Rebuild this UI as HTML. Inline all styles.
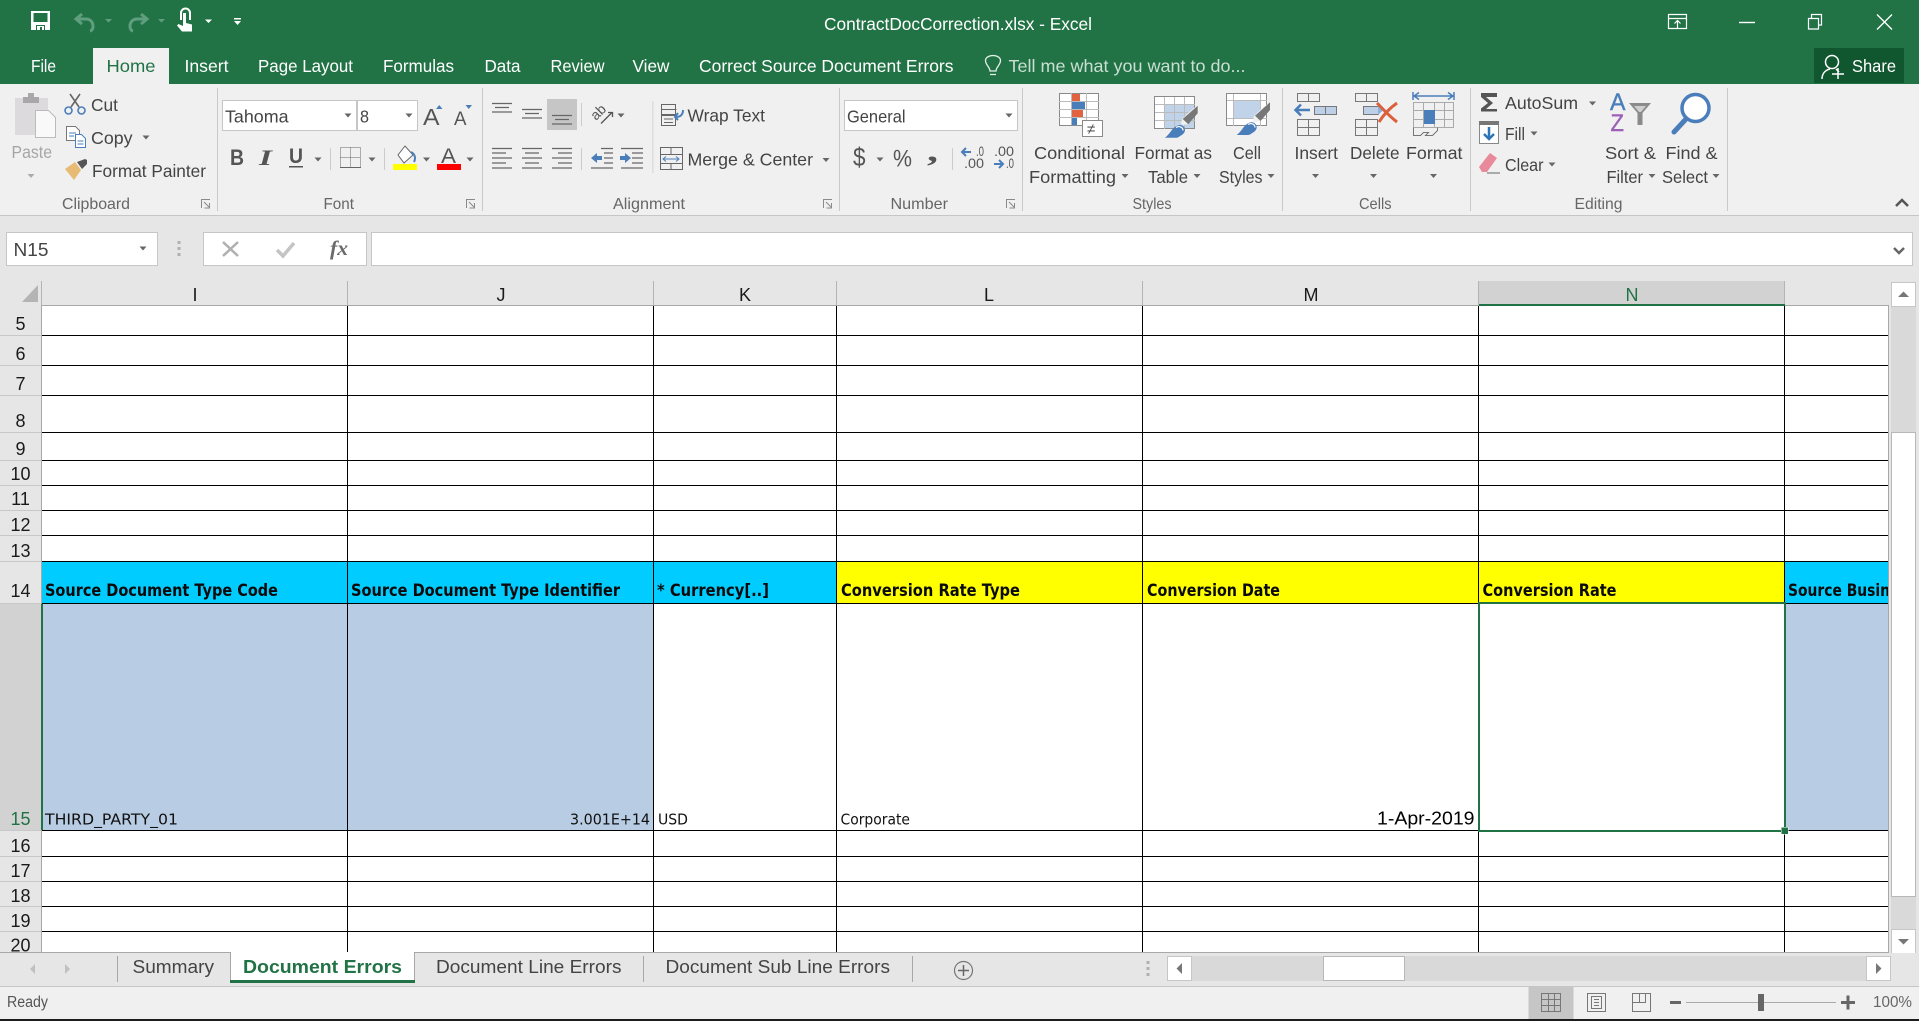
<!DOCTYPE html>
<html lang="en"><head><meta charset="utf-8"><title>ContractDocCorrection.xlsx - Excel</title>
<style>
html,body{margin:0;padding:0;background:#e6e6e6;overflow:hidden}
svg{display:block;position:absolute;left:0;top:0}
text{font-family:"Liberation Sans",sans-serif;font-size:17.5px;fill:#444;white-space:pre}
.w{fill:#fff}
.g{font-size:16px;fill:#666}
.h{font-size:18px;fill:#1a1a1a;text-anchor:middle}
.c{font-family:"DejaVu Sans",sans-serif;font-size:15px;fill:#111}
.b{font-family:"DejaVu Sans",sans-serif;font-weight:bold;font-size:16.5px;fill:#0a0a0a}
</style></head><body>
<svg width="1919" height="1021" viewBox="0 0 1919 1021" xmlns="http://www.w3.org/2000/svg">
<rect width="1919" height="1021" fill="#e6e6e6"/>
<!-- title bar -->
<rect width="1919" height="84" fill="#217346"/>
<path d="M31 11h19v19H31z" fill="#fff"/><path d="M33.500 13h14v9h-14z" fill="#217346"/><path d="M36 25h9v5h-9z" fill="#217346"/><path d="M37 26h7v4h-2v-3h-2v3h-3z" fill="#fff"/>
<g fill="none" stroke="#5f9f7f" stroke-width="3"><path d="M90 31c5-1 4-12-4-12H76"/><path d="M82 14l-6 5 6 5"/><path d="M133 31c-5-1-4-12 4-12h10"/><path d="M141 14l6 5-6 5"/></g>
<path d="M105 19h7l-3.500 3.500zM158 19h7l-3.500 3.500z" fill="#5f9f7f"/>
<g fill="#fff"><path d="M180 13a5.500 5.500 0 0 1 11 0v7h-2v-7a3.500 3.500 0 0 0-7 0v7h-2z"/><path d="M183 13h3v10l6 1.500v7h-10l-5-6 1.500-1.500 4.500 2z"/><path d="M205 19.500h7l-3.500 3.500zM234 18h7v1.500h-7zM234 21h7l-3.500 4z"/></g>
<text class="w" x="824" y="30" textLength="268" lengthAdjust="spacingAndGlyphs">ContractDocCorrection.xlsx - Excel</text>
<g fill="none" stroke="#fff" stroke-width="1.200"><path d="M1668.500 14.500h18v14h-18zM1668.500 18.500h18M1677.500 28v-7M1674.500 23.500l3-3 3 3"/><path d="M1739 22.500h16" stroke-width="1.400"/><path d="M1808.500 18.500h10v10.500h-10zM1811.500 18.500v-4h10v10.500h-3"/><path d="M1877 14.500l15 15M1892 14.500l-15 15" stroke-width="1.300"/></g>
<!-- tabs -->
<rect x="93" y="48" width="76" height="36" fill="#f0f0f0"/>
<text class="w" x="31" y="72" textLength="25" lengthAdjust="spacingAndGlyphs">File</text>
<text x="106.500" y="72" textLength="49" lengthAdjust="spacingAndGlyphs" style="fill:#217346">Home</text>
<text class="w" x="184.500" y="72" textLength="44" lengthAdjust="spacingAndGlyphs">Insert</text>
<text class="w" x="258" y="72" textLength="95" lengthAdjust="spacingAndGlyphs">Page Layout</text>
<text class="w" x="383" y="72" textLength="71" lengthAdjust="spacingAndGlyphs">Formulas</text>
<text class="w" x="484.500" y="72" textLength="36" lengthAdjust="spacingAndGlyphs">Data</text>
<text class="w" x="550.500" y="72" textLength="54" lengthAdjust="spacingAndGlyphs">Review</text>
<text class="w" x="632.500" y="72" textLength="37" lengthAdjust="spacingAndGlyphs">View</text>
<text class="w" x="699" y="72" textLength="254.500" lengthAdjust="spacingAndGlyphs">Correct Source Document Errors</text>
<path d="M990 71c0-4-4.500-6-4.500-10.500a7.500 5 0 0 1 15 0c0 4.500-4.500 6.500-4.500 10.500zM990 74.500h6" fill="none" stroke="#e4efe9" stroke-width="1.300"/>
<text x="1008.500" y="72" textLength="237" lengthAdjust="spacingAndGlyphs" style="fill:#c9dfd3">Tell me what you want to do...</text>
<rect x="1814" y="48" width="90" height="35" fill="#10572f"/>
<g fill="none" stroke="#fff" stroke-width="1.500"><ellipse cx="1832" cy="62" rx="6.500" ry="6.500"/><path d="M1822 79c0-6 4-9 8-10M1836 69l3 3M1832 74h12M1838 68v11" /></g>
<text class="w" x="1852" y="72" textLength="44" lengthAdjust="spacingAndGlyphs">Share</text>
<!-- ribbon -->
<rect y="84" width="1919" height="131" fill="#f0f0f0"/>
<rect y="215" width="1919" height="1" fill="#c6c6c6"/>
<g fill="#c9c9c9"><rect x="217" y="88" width="1" height="123"/><rect x="482" y="88" width="1" height="123"/><rect x="839" y="88" width="1" height="123"/><rect x="1022" y="88" width="1" height="123"/><rect x="1282" y="88" width="1" height="123"/><rect x="1470" y="88" width="1" height="123"/><rect x="1727" y="88" width="1" height="123"/></g>
<!-- group labels -->
<text class="g" x="62" y="209" textLength="68" lengthAdjust="spacingAndGlyphs">Clipboard</text>
<text class="g" x="323.500" y="209" textLength="30.500" lengthAdjust="spacingAndGlyphs">Font</text>
<text class="g" x="613" y="209" textLength="72" lengthAdjust="spacingAndGlyphs">Alignment</text>
<text class="g" x="890.500" y="209" textLength="57.500" lengthAdjust="spacingAndGlyphs">Number</text>
<text class="g" x="1132.500" y="209" textLength="39" lengthAdjust="spacingAndGlyphs">Styles</text>
<text class="g" x="1359" y="209" textLength="32.500" lengthAdjust="spacingAndGlyphs">Cells</text>
<text class="g" x="1574.500" y="209" textLength="48" lengthAdjust="spacingAndGlyphs">Editing</text>
<g fill="none" stroke="#8a8a8a" stroke-width="1"><path d="M201.500 208v-8.500h8.500M204 202l5 5M209.500 203v5h-5"/><path d="M466.500 208v-8.500h8.500M469 202l5 5M474.500 203v5h-5"/><path d="M823.500 208v-8.500h8.500M826 202l5 5M831.500 203v5h-5"/><path d="M1006.500 208v-8.500h8.500M1009 202l5 5M1014.500 203v5h-5"/></g>
<!-- clipboard -->
<path d="M15 98h33v37H15z" fill="#dcdadc"/><path d="M23 97h5v-4h6v4h5v6H23z" fill="#a9a7a9"/>
<path d="M35.500 110.500h13l7 7v20h-20z" fill="#f9f9f9" stroke="#bbb"/>
<text x="11.500" y="158" textLength="40.500" lengthAdjust="spacingAndGlyphs" style="fill:#a6a6a6">Paste</text>
<path d="M27.500 174h7l-3.500 4z" fill="#ababab"/>
<g fill="none" stroke-width="1.600"><path d="M70 94l9 13M80 94l-9 13" stroke="#666"/><circle cx="68.500" cy="110.500" r="3.500" stroke="#4a7ebb"/><circle cx="81.500" cy="110.500" r="3.500" stroke="#4a7ebb"/></g>
<text x="91" y="111" textLength="27" lengthAdjust="spacingAndGlyphs">Cut</text>
<g fill="#fff" stroke="#777"><path d="M66.500 126.500h9l4 4v10h-13z"/><path d="M75.500 134.500h6l4 4v9h-10z" stroke="#4a7ebb"/></g><path d="M69 133h7M69 136h5M77.500 141h6M77.500 144h6" stroke="#4a7ebb"/>
<text x="91" y="144" textLength="41.500" lengthAdjust="spacingAndGlyphs">Copy</text>
<path d="M142.500 135.500h7l-3.500 4z" fill="#666"/>
<path d="M65 169l10-7 6 8-7 10z" fill="#e8bb74"/><path d="M77 162l8-3 2 1v4l-5 5z" fill="#555"/>
<text x="92" y="177" textLength="114" lengthAdjust="spacingAndGlyphs">Format Painter</text>
<!-- font -->
<rect x="222.500" y="100.500" width="134" height="30" fill="#fff" stroke="#c6c6c6"/><rect x="357.500" y="100.500" width="60" height="30" fill="#fff" stroke="#c6c6c6"/>
<text x="225" y="122.500" textLength="63.500" lengthAdjust="spacingAndGlyphs">Tahoma</text><text x="360" y="122.500" textLength="9" lengthAdjust="spacingAndGlyphs">8</text>
<path d="M344.500 113.500h7l-3.500 4zM405.500 113.500h7l-3.500 4z" fill="#666"/>
<text x="423" y="125" textLength="16.500" lengthAdjust="spacingAndGlyphs" style="font-size:23px;fill:#555">A</text>
<text x="454" y="125" textLength="12.500" lengthAdjust="spacingAndGlyphs" style="font-size:19.500px;fill:#555">A</text>
<path d="M436 109h6.500l-3.250-4zM465.500 105h6.500l-3.250 4z" fill="#4a7ebb"/>
<text x="230" y="165" textLength="14" lengthAdjust="spacingAndGlyphs" style="font-size:22px;font-weight:bold;fill:#555">B</text>
<text x="259" y="165" textLength="13" lengthAdjust="spacingAndGlyphs" style="font-size:22px;font-weight:bold;font-style:italic;font-family:'Liberation Serif',serif;fill:#555">I</text>
<text x="289" y="163" textLength="14" lengthAdjust="spacingAndGlyphs" style="font-size:21px;font-weight:bold;fill:#555">U</text>
<rect x="289" y="166" width="14" height="1.500" fill="#555"/>
<path d="M314.500 157.500h7l-3.500 4zM368.500 157.500h7l-3.500 4zM423 157.500h7l-3.500 4zM466.500 157.500h7l-3.500 4z" fill="#666"/>
<rect x="330" y="148" width="1" height="22" fill="#ccc"/><rect x="384" y="148" width="1" height="22" fill="#ccc"/>
<g fill="none" stroke="#666"><path d="M340.500 147.500h20v20h-20zM350.500 147.500v20M340.500 157.500h20" stroke-dasharray="1 1"/><path d="M340 167.500h21"/></g>
<path d="M405 146l-7 9 6 8 9-8z" fill="#fff" stroke="#666"/><path d="M411 152c4 2 5 6 3 10" fill="none" stroke="#4a7ebb" stroke-width="2"/>
<rect x="393" y="164" width="24" height="6" fill="#ffff00"/>
<text x="441" y="163" textLength="15" lengthAdjust="spacingAndGlyphs" style="font-size:21px;fill:#555">A</text>
<rect x="437" y="164" width="24" height="6" fill="#ff0000"/>
<!-- alignment -->
<rect x="547" y="99" width="30" height="31" fill="#c6c6c6"/>
<g fill="none" stroke="#666" stroke-width="1.300"><path d="M492 103.500h20M495 107.500h14M492 112h20M522 109.500h20M525 113.500h14M522 118h20M552 115.500h20M555 119.500h14M552 124h20"/>
<path d="M492 148.500h20M492 153h14M492 158h20M492 163h14M492 168h20M522 148.500h20M525 153h14M522 158h20M525 163h14M522 168h20M552 148.500h20M558 153h14M552 158h20M558 163h14M552 168h20"/>
<path d="M601 123.500l11-11M608 112.500h4.500v4.500" stroke="#555"/>
<path d="M601 148.500h12M604 153h9M604 158h9M604 163h9M591 168h22M621 148.500h22M632 153h11M632 158h11M632 163h11M621 168h22"/></g>
<text x="596" y="121" transform="rotate(-45 596 121)" style="font-size:14px;fill:#555">ab</text>
<path d="M617.500 113.500h7l-3.500 4zM822.500 158h7l-3.500 4z" fill="#666"/>
<path d="M591 158l6-5v3h5v4h-5v3zM631 158l-6-5v3h-5v4h5v3z" fill="#4a7ebb"/>
<rect x="581" y="103" width="1" height="23" fill="#ccc"/><rect x="581" y="148" width="1" height="22" fill="#ccc"/><rect x="652" y="101" width="1.500" height="72" fill="#ddd"/>
<g fill="none" stroke="#666"><path d="M661.500 104.500h14v10h-14zM661.500 109.500h15M661.500 115.500h14v10h-14zM664 119h9M664 122.500h9"/></g>
<path d="M683 110c0 5-3 7-7 7m2-4l-3 4 3 3" fill="none" stroke="#4a7ebb" stroke-width="2"/>
<text x="687.500" y="121.500" textLength="77.500" lengthAdjust="spacingAndGlyphs">Wrap Text</text>
<g fill="none" stroke="#666"><path d="M660.500 147.500h22v22h-22zM660.500 154.500h22M660.500 163.500h22M671 147.500v7M671 163.500v6"/></g>
<path d="M663 159h16M666 156.500l-3 2.500 3 2.500M676 156.500l3 2.500-3 2.500" fill="none" stroke="#4a7ebb"/>
<text x="687.500" y="165.500" textLength="125.500" lengthAdjust="spacingAndGlyphs">Merge &amp; Center</text>
<!-- number -->
<rect x="844.500" y="100.500" width="173" height="30" fill="#fff" stroke="#c6c6c6"/>
<text x="847" y="122.500" textLength="58.500" lengthAdjust="spacingAndGlyphs">General</text>
<path d="M1005.500 113.500h7l-3.500 4zM876.500 157.500h7l-3.500 4z" fill="#666"/>
<text x="853" y="166" textLength="12.500" lengthAdjust="spacingAndGlyphs" style="font-size:26px;fill:#555">$</text>
<text x="893" y="166.500" textLength="19" lengthAdjust="spacingAndGlyphs" style="font-size:24px;fill:#555">%</text>
<text x="927" y="161" textLength="11" lengthAdjust="spacingAndGlyphs" style="font-size:30px;font-weight:bold;font-family:'Liberation Serif',serif;fill:#555">,</text>
<rect x="952" y="148" width="1" height="22" fill="#ccc"/>
<text x="976" y="156" textLength="8" lengthAdjust="spacingAndGlyphs" style="font-size:14px;fill:#555">.0</text>
<text x="964" y="168" textLength="20" lengthAdjust="spacingAndGlyphs" style="font-size:14px;fill:#555">.00</text>
<text x="994" y="156" textLength="20" lengthAdjust="spacingAndGlyphs" style="font-size:14px;fill:#555">.00</text>
<text x="1006" y="168" textLength="8" lengthAdjust="spacingAndGlyphs" style="font-size:14px;fill:#555">.0</text>
<path d="M971 152h-9M966 148l-4 4 4 4M994 164h9M999 160l4 4-4 4" fill="none" stroke="#4a7ebb" stroke-width="2"/>
<!-- styles -->
<g shape-rendering="crispEdges">
<rect x="1059.500" y="93.500" width="39" height="32" fill="#fff" stroke="#8a8a8a"/>
<path d="M1059 101.500h40M1059 109.500h40M1059 117.500h40M1071.500 93v32M1086.500 93v32" stroke="#bbb" fill="none"/>
<rect x="1072" y="94" width="8" height="7" fill="#e2633f"/><rect x="1072" y="102" width="13" height="7" fill="#4a7ebb"/><rect x="1072" y="110" width="11" height="7" fill="#e2633f"/><rect x="1072" y="118" width="5" height="7" fill="#4a7ebb"/>
<rect x="1082.500" y="120.500" width="20" height="16" fill="#fff" stroke="#8a8a8a"/>
</g>
<text x="1087" y="134" style="font-size:15px;fill:#555">≠</text>
<g shape-rendering="crispEdges">
<rect x="1154.500" y="96.500" width="40" height="32" fill="#fff" stroke="#8a8a8a"/>
<rect x="1164" y="104" width="30" height="24" fill="#c0d3e8"/>
<path d="M1155 104.500h40M1155 112.500h40M1155 120.500h40M1164.500 97v32M1174.500 97v32M1184.500 97v32" stroke="#bbb" fill="none"/>
<rect x="1226.500" y="93.500" width="40" height="32" fill="#fff" stroke="#8a8a8a"/>
<rect x="1233" y="101" width="27" height="17" fill="#c0d3e8"/>
<path d="M1227 100.500h40M1227 118.500h40M1233.500 94v32M1260.500 94v32" stroke="#bbb" fill="none"/>
</g>
<path d="M1181 124l1-5 6-6 9.700-8v8l-9.400 11-5 1z" fill="#f0f0f0"/>
<path d="M1197.700 105.700v7.600l-9.400 11-5.600-5.300z" fill="#777"/>
<path d="M1165 137.700c4-3 6-7 8.300-9.400 2-2 4.700-3.300 6.700-3.300 3 0 5 2.500 5 5 0 2-1.500 4-3.300 5-2 1.500-3.800 2.700-5 2.700z" fill="#4a7ebb"/>
<path d="M1176 127.500c3-2 7-.5 7 3" fill="none" stroke="#fff" stroke-width="1.200"/>
<path d="M1253 121l1-5 6-6 10-8v8l-9.400 11-5 1z" fill="#f0f0f0"/>
<path d="M1270 102.300v7.700l-9.400 11-5.600-5.300z" fill="#777"/>
<path d="M1236.700 135c4-3 6-7 8.300-9.400 2-2 4.700-3.300 6.700-3.300 3 0 5 2.500 5 5 0 2-1.500 4-3.300 5-2 1.500-3.800 2.700-5 2.700z" fill="#4a7ebb"/>
<path d="M1248 124.500c3-2 7-.5 7 3" fill="none" stroke="#fff" stroke-width="1.200"/>
<text x="1034" y="159" textLength="91" lengthAdjust="spacingAndGlyphs">Conditional</text>
<text x="1029" y="183" textLength="87" lengthAdjust="spacingAndGlyphs">Formatting</text>
<text x="1134.500" y="159" textLength="77.500" lengthAdjust="spacingAndGlyphs">Format as</text>
<text x="1148" y="183" textLength="40" lengthAdjust="spacingAndGlyphs">Table</text>
<text x="1233" y="159" textLength="28" lengthAdjust="spacingAndGlyphs">Cell</text>
<text x="1219" y="183" textLength="43.500" lengthAdjust="spacingAndGlyphs">Styles</text>
<path d="M1121.500 174h7l-3.500 4zM1193.500 174h7l-3.500 4zM1267.500 174h7l-3.500 4z" fill="#666"/>
<!-- cells -->
<g fill="none" stroke="#777" shape-rendering="crispEdges">
<path d="M1297.500 93.500h22v8h-22zM1308.500 93.500v8M1297.500 119.500h22v16h-22zM1308.500 119.500v16M1297.500 127.500h22"/>
<path d="M1314.500 106.500h22v8h-22zM1325.500 106.500v8" fill="#bdd0e8"/>
<path d="M1355.500 93.500h22v8h-22zM1366.500 93.500v8M1355.500 119.500h22v16h-22zM1366.500 119.500v16M1355.500 127.500h22"/>
<path d="M1363.500 106.500h15v8h-15z" fill="#bdd0e8"/>
<path d="M1413.500 102.500h40v25h-40zM1423.500 102.500v25M1434.500 102.500v25M1444.500 102.500v25M1413.500 110.500h40M1413.500 119.500h40" stroke="#aaa"/>
<path d="M1413.500 127.500v8h7l3-3h5l-3 3h7l5-5v-3"/>
</g>
<path d="M1310 110h-14M1301 104.500l-5.500 5.500 5.500 5.500" fill="none" stroke="#4a7ebb" stroke-width="2.500"/>
<path d="M1378 106v9l5-4.500z" fill="#8fb0d8"/>
<path d="M1377 103c5 5 12 13 20 19M1397 103c-7 5-13 11-18 19" fill="none" stroke="#dc5f3c" stroke-width="3"/>
<path d="M1414 96h39M1419 92.500l-5 3.500 5 3.500M1448 92.500l5 3.500-5 3.500M1413 92v8M1454 92v8" fill="none" stroke="#4a7ebb" stroke-width="1.500"/>
<rect x="1424" y="110" width="11" height="14" fill="#4a7ebb"/>
<text x="1294.500" y="159" textLength="43.500" lengthAdjust="spacingAndGlyphs">Insert</text>
<text x="1350" y="159" textLength="49.500" lengthAdjust="spacingAndGlyphs">Delete</text>
<text x="1406" y="159" textLength="56.500" lengthAdjust="spacingAndGlyphs">Format</text>
<path d="M1312 174h7l-3.500 4zM1370 174h7l-3.500 4zM1430 174h7l-3.500 4z" fill="#666"/>
<!-- editing -->
<path d="M1481 93h16v4h-11l7 6-7 6h11v2.500h-16v-3l7-5.500-7-6z" fill="#555"/>
<text x="1505" y="109" textLength="73" lengthAdjust="spacingAndGlyphs">AutoSum</text>
<path d="M1589 101.500h7l-3.500 4zM1530.500 131.500h7l-3.500 4zM1548.500 162.500h7l-3.500 4z" fill="#666"/>
<rect x="1479.500" y="121.500" width="19" height="22" fill="#fff" stroke="#888"/><rect x="1479" y="121" width="20" height="4" fill="#777"/>
<path d="M1489 127v12M1484 134l5 5 5-5" fill="none" stroke="#2f75b5" stroke-width="2.500"/>
<text x="1505" y="140" textLength="20" lengthAdjust="spacingAndGlyphs">Fill</text>
<path d="M1479 167l11-14 7 5-10 14h-5z" fill="#e88a9a"/><path d="M1487 173h13" stroke="#666"/>
<text x="1505" y="171" textLength="38.500" lengthAdjust="spacingAndGlyphs">Clear</text>
<text x="1610" y="110" textLength="15.500" lengthAdjust="spacingAndGlyphs" style="font-size:24px;fill:#4a7ebb;stroke:#4a7ebb;stroke-width:.4">A</text>
<text x="1610.500" y="131" textLength="13.500" lengthAdjust="spacingAndGlyphs" style="font-size:24px;fill:#9a5fb8;stroke:#9a5fb8;stroke-width:.4">Z</text>
<path d="M1629 103h22l-8.500 10v12h-5v-12z" fill="#8a8a8a"/><path d="M1634 106h12l-5 6h-2z" fill="#cfcfcf"/>
<circle cx="1695.500" cy="108" r="13.500" fill="#fff" stroke="#4a7ebb" stroke-width="3.500"/>
<path d="M1686 119l-12 13" stroke="#4a7ebb" stroke-width="5" stroke-linecap="round"/>
<text x="1605" y="159" textLength="51" lengthAdjust="spacingAndGlyphs">Sort &amp;</text>
<text x="1606.500" y="183" textLength="36.500" lengthAdjust="spacingAndGlyphs">Filter</text>
<text x="1665.500" y="159" textLength="52" lengthAdjust="spacingAndGlyphs">Find &amp;</text>
<text x="1662" y="183" textLength="46" lengthAdjust="spacingAndGlyphs">Select</text>
<path d="M1648.500 174h7l-3.500 4zM1712.500 174h7l-3.500 4z" fill="#666"/>
<path d="M1896 206l6-6 6 6" fill="none" stroke="#555" stroke-width="2.500"/>
<!-- formula bar -->
<rect x="6.500" y="232.500" width="151" height="33" fill="#fff" stroke="#c6c6c6"/>
<text x="13.500" y="256" textLength="35" lengthAdjust="spacingAndGlyphs" style="font-size:18px">N15</text>
<path d="M139.500 246.500h7l-3.500 4z" fill="#666"/>
<path d="M177.500 241h3v3h-3zM177.500 247h3v3h-3zM177.500 253h3v3h-3z" fill="#b0b0b0"/>
<rect x="203.500" y="232.500" width="163" height="33" fill="#fff" stroke="#c6c6c6"/>
<rect x="371.500" y="232.500" width="1541" height="33" fill="#fff" stroke="#c6c6c6"/>
<path d="M223 242l15 14M238 242l-15 14" stroke="#b0b0b0" stroke-width="2.500" fill="none"/>
<path d="M277 250l6 6 11-13" stroke="#c4c4c4" stroke-width="3.500" fill="none"/>
<text x="330" y="255" textLength="18" lengthAdjust="spacingAndGlyphs" style="font-family:'Liberation Serif',serif;font-style:italic;font-weight:bold;font-size:21px;fill:#6a6a6a">fx</text>
<path d="M1894 248l5 5 5-5" fill="none" stroke="#666" stroke-width="2.500"/>
<!-- sheet fills -->
<rect x="42" y="306" width="1846" height="646" fill="#fff"/>
<rect x="1478" y="281" width="307" height="24" fill="#d2d2d2"/>
<rect x="0" y="604" width="41" height="226" fill="#d2d2d2"/>
<g shape-rendering="crispEdges">
<rect x="42" y="561" width="1436" height="42" fill="#00ccff"/>
<rect x="836" y="561" width="949" height="42" fill="#ffff00"/>
<rect x="1785" y="561" width="103" height="42" fill="#00ccff"/>
<rect x="42" y="604" width="611" height="226" fill="#b8cce4"/>
<rect x="1785" y="604" width="103" height="226" fill="#b8cce4"/>
<!-- column header separators -->
<g fill="#b4b4b4"><rect x="41" y="281" width="1" height="25"/><rect x="347" y="281" width="1" height="25"/><rect x="653" y="281" width="1" height="25"/><rect x="836" y="281" width="1" height="25"/><rect x="1142" y="281" width="1" height="25"/><rect x="1478" y="281" width="1" height="25"/><rect x="1784" y="281" width="1" height="25"/></g>
<rect x="41" y="305" width="1848" height="1" fill="#a8a8a8"/>
<rect x="41" y="306" width="1" height="646" fill="#a8a8a8"/>
<rect x="1479" y="304" width="306" height="2" fill="#217346"/>
<!-- row header separators -->
<g fill="#c8c8c8"><rect x="0" y="335" width="41" height="1"/><rect x="0" y="365" width="41" height="1"/><rect x="0" y="395" width="41" height="1"/><rect x="0" y="432" width="41" height="1"/><rect x="0" y="460" width="41" height="1"/><rect x="0" y="485" width="41" height="1"/><rect x="0" y="510" width="41" height="1"/><rect x="0" y="535" width="41" height="1"/><rect x="0" y="561" width="41" height="1"/><rect x="0" y="603" width="41" height="1"/><rect x="0" y="830" width="41" height="1"/><rect x="0" y="856" width="41" height="1"/><rect x="0" y="881" width="41" height="1"/><rect x="0" y="906" width="41" height="1"/><rect x="0" y="931" width="41" height="1"/></g>
<rect x="41" y="604" width="2" height="226" fill="#217346"/>
<!-- grid -->
<g fill="#000">
<rect x="42" y="335" width="1846" height="1"/><rect x="42" y="365" width="1846" height="1"/><rect x="42" y="395" width="1846" height="1"/><rect x="42" y="432" width="1846" height="1"/><rect x="42" y="460" width="1846" height="1"/><rect x="42" y="485" width="1846" height="1"/><rect x="42" y="510" width="1846" height="1"/><rect x="42" y="535" width="1846" height="1"/><rect x="42" y="561" width="1846" height="1"/><rect x="42" y="603" width="1846" height="1"/><rect x="42" y="830" width="1846" height="1"/><rect x="42" y="856" width="1846" height="1"/><rect x="42" y="881" width="1846" height="1"/><rect x="42" y="906" width="1846" height="1"/><rect x="42" y="931" width="1846" height="1"/>
<rect x="347" y="306" width="1" height="646"/><rect x="653" y="306" width="1" height="646"/><rect x="836" y="306" width="1" height="646"/><rect x="1142" y="306" width="1" height="646"/><rect x="1478" y="306" width="1" height="646"/><rect x="1784" y="306" width="1" height="646"/>
</g>
<!-- selection -->
<rect x="1478" y="602" width="2" height="229" fill="#217346"/><rect x="1784" y="602" width="2" height="229" fill="#217346"/>
<rect x="1478" y="602" width="308" height="2" fill="#217346"/><rect x="1478" y="830" width="308" height="2" fill="#217346"/>
<rect x="1781" y="827" width="7" height="7" fill="#217346" stroke="#fff" stroke-width=".5"/>
</g>
<path d="M38 285v17H22z" fill="#b4b4b4"/>
<!-- column labels -->
<text class="h" x="195" y="301">I</text><text class="h" x="501" y="301">J</text><text class="h" x="745" y="301">K</text><text class="h" x="989" y="301">L</text><text class="h" x="1311" y="301">M</text><text class="h" x="1632" y="301" style="fill:#217346">N</text>
<!-- row labels -->
<g>
<text class="h" x="20.500" y="330">5</text><text class="h" x="20.500" y="360">6</text><text class="h" x="20.500" y="390">7</text><text class="h" x="20.500" y="427">8</text><text class="h" x="20.500" y="455">9</text><text class="h" x="20.500" y="480">10</text><text class="h" x="20.500" y="505">11</text><text class="h" x="20.500" y="531">12</text><text class="h" x="20.500" y="557">13</text><text class="h" x="20.500" y="597">14</text><text class="h" x="20.500" y="825" style="fill:#217346">15</text><text class="h" x="20.500" y="852">16</text><text class="h" x="20.500" y="877">17</text><text class="h" x="20.500" y="902">18</text><text class="h" x="20.500" y="927">19</text><text class="h" x="20.500" y="951.500">20</text>
</g>
<!-- cell text -->
<text class="b" x="45" y="596" textLength="233" lengthAdjust="spacingAndGlyphs">Source Document Type Code</text>
<text class="b" x="351" y="596" textLength="269" lengthAdjust="spacingAndGlyphs">Source Document Type Identifier</text>
<text class="b" x="657" y="596" textLength="112" lengthAdjust="spacingAndGlyphs">* Currency[..]</text>
<text class="b" x="841" y="596" textLength="179" lengthAdjust="spacingAndGlyphs">Conversion Rate Type</text>
<text class="b" x="1147" y="596" textLength="133" lengthAdjust="spacingAndGlyphs">Conversion Date</text>
<text class="b" x="1482.500" y="596" textLength="134" lengthAdjust="spacingAndGlyphs">Conversion Rate</text>
<text class="b" x="1788" y="596" textLength="128" lengthAdjust="spacingAndGlyphs">Source Business</text>
<text class="c" x="45" y="824.500" textLength="133" lengthAdjust="spacingAndGlyphs">THIRD_PARTY_01</text>
<text class="c" x="570" y="824.500" textLength="80" lengthAdjust="spacingAndGlyphs">3.001E+14</text>
<text class="c" x="658" y="824.500" textLength="30" lengthAdjust="spacingAndGlyphs">USD</text>
<text class="c" x="840.500" y="824.500" textLength="69.500" lengthAdjust="spacingAndGlyphs">Corporate</text>
<text x="1377" y="824.500" textLength="97.500" lengthAdjust="spacingAndGlyphs" style="font-size:18px;fill:#000">1-Apr-2019</text>
<!-- vertical scrollbar -->
<rect x="1888" y="281" width="31" height="671" fill="#e6e6e6"/>
<rect x="1888" y="305" width="1" height="648" fill="#a8a8a8"/>
<rect x="1891" y="306" width="25" height="623" fill="#d9d9d9"/>
<rect x="1891.500" y="282.500" width="24" height="24" fill="#fff" stroke="#c6c6c6"/>
<rect x="1891.500" y="432.500" width="24" height="464" fill="#fff" stroke="#b8b8b8"/>
<rect x="1891.500" y="929.500" width="24" height="24" fill="#fff" stroke="#c6c6c6"/>
<path d="M1898 297l5.500-5.500 5.500 5.500zM1898 939l5.500 5.500 5.500-5.500z" fill="#777"/>
<!-- tab strip -->
<rect y="952" width="1888" height="1" fill="#a8a8a8"/>
<rect y="953" width="1919" height="33" fill="#e6e6e6"/>
<rect y="986" width="1919" height="1" fill="#c6c6c6"/>
<path d="M35 964v10l-5-5zM65 964v10l5-5z" fill="#c0c0c0"/>
<g fill="#a8a8a8"><rect x="117" y="956" width="1" height="26"/><rect x="643" y="956" width="1" height="26"/><rect x="912" y="956" width="1" height="26"/></g>
<text x="132.500" y="973" textLength="81.500" lengthAdjust="spacingAndGlyphs" style="font-size:18px">Summary</text>
<rect x="230" y="952" width="185" height="31" fill="#fff"/>
<rect x="230" y="952" width="1" height="29" fill="#a8a8a8"/><rect x="414" y="952" width="1" height="29" fill="#a8a8a8"/>
<rect x="230" y="980" width="185" height="3" fill="#217346"/>
<text x="243" y="973" textLength="159" lengthAdjust="spacingAndGlyphs" style="font-size:18px;font-weight:bold;fill:#217346">Document Errors</text>
<text x="436" y="973" textLength="185.500" lengthAdjust="spacingAndGlyphs" style="font-size:18px">Document Line Errors</text>
<text x="665.500" y="973" textLength="224.500" lengthAdjust="spacingAndGlyphs" style="font-size:18px">Document Sub Line Errors</text>
<circle cx="963.500" cy="970.500" r="9" fill="none" stroke="#777" stroke-width="1.200"/><path d="M958 970.500h11M963.500 965v11" stroke="#666" stroke-width="1.500"/>
<path d="M1146.500 961h3v3h-3zM1146.500 967h3v3h-3zM1146.500 973h3v3h-3z" fill="#b0b0b0"/>
<rect x="1191" y="956" width="675" height="25" fill="#d9d9d9"/>
<rect x="1167.500" y="956.500" width="24" height="24" fill="#fff" stroke="#c6c6c6"/>
<rect x="1323.500" y="956.500" width="81" height="24" fill="#fff" stroke="#b8b8b8"/>
<rect x="1866.500" y="956.500" width="24" height="24" fill="#fff" stroke="#c6c6c6"/>
<path d="M1182 963v11l-5.500-5.500zM1876 963v11l5.500-5.500z" fill="#777"/>
<!-- status bar -->
<rect y="987" width="1919" height="32" fill="#f0f0f0"/>
<rect y="1019" width="1919" height="2" fill="#1c1c1c"/>
<text x="7" y="1007" textLength="41" lengthAdjust="spacingAndGlyphs" style="font-size:15.500px;fill:#555">Ready</text>
<rect x="1528.500" y="987" width="45" height="32" fill="#c6c6c6"/>
<g fill="none" stroke="#777" shape-rendering="crispEdges"><path d="M1541.500 993.500h19v18h-19zM1548.500 993.500v18M1554.500 993.500v18M1541.500 999.500h19M1541.500 1005.500h19"/>
<path d="M1587.500 993.500h18v18h-18zM1591.500 996.500h10v12h-10zM1594 999.500h5M1594 1002.500h5M1594 1005.500h5"/>
<path d="M1632.500 993.500h18v18h-18zM1632.500 1002.500h13v-9M1639.500 993.500v9"/></g>
<rect x="1670" y="1001" width="11" height="3" fill="#666"/>
<rect x="1686" y="1002" width="150" height="1" fill="#aaa"/>
<rect x="1758" y="994" width="6" height="17" fill="#666"/>
<path d="M1841 1002.500h14M1848 995.500v14" stroke="#666" stroke-width="3"/>
<text x="1873" y="1007" textLength="39" lengthAdjust="spacingAndGlyphs" style="font-size:15.500px;fill:#666">100%</text>
</svg>
</body></html>
